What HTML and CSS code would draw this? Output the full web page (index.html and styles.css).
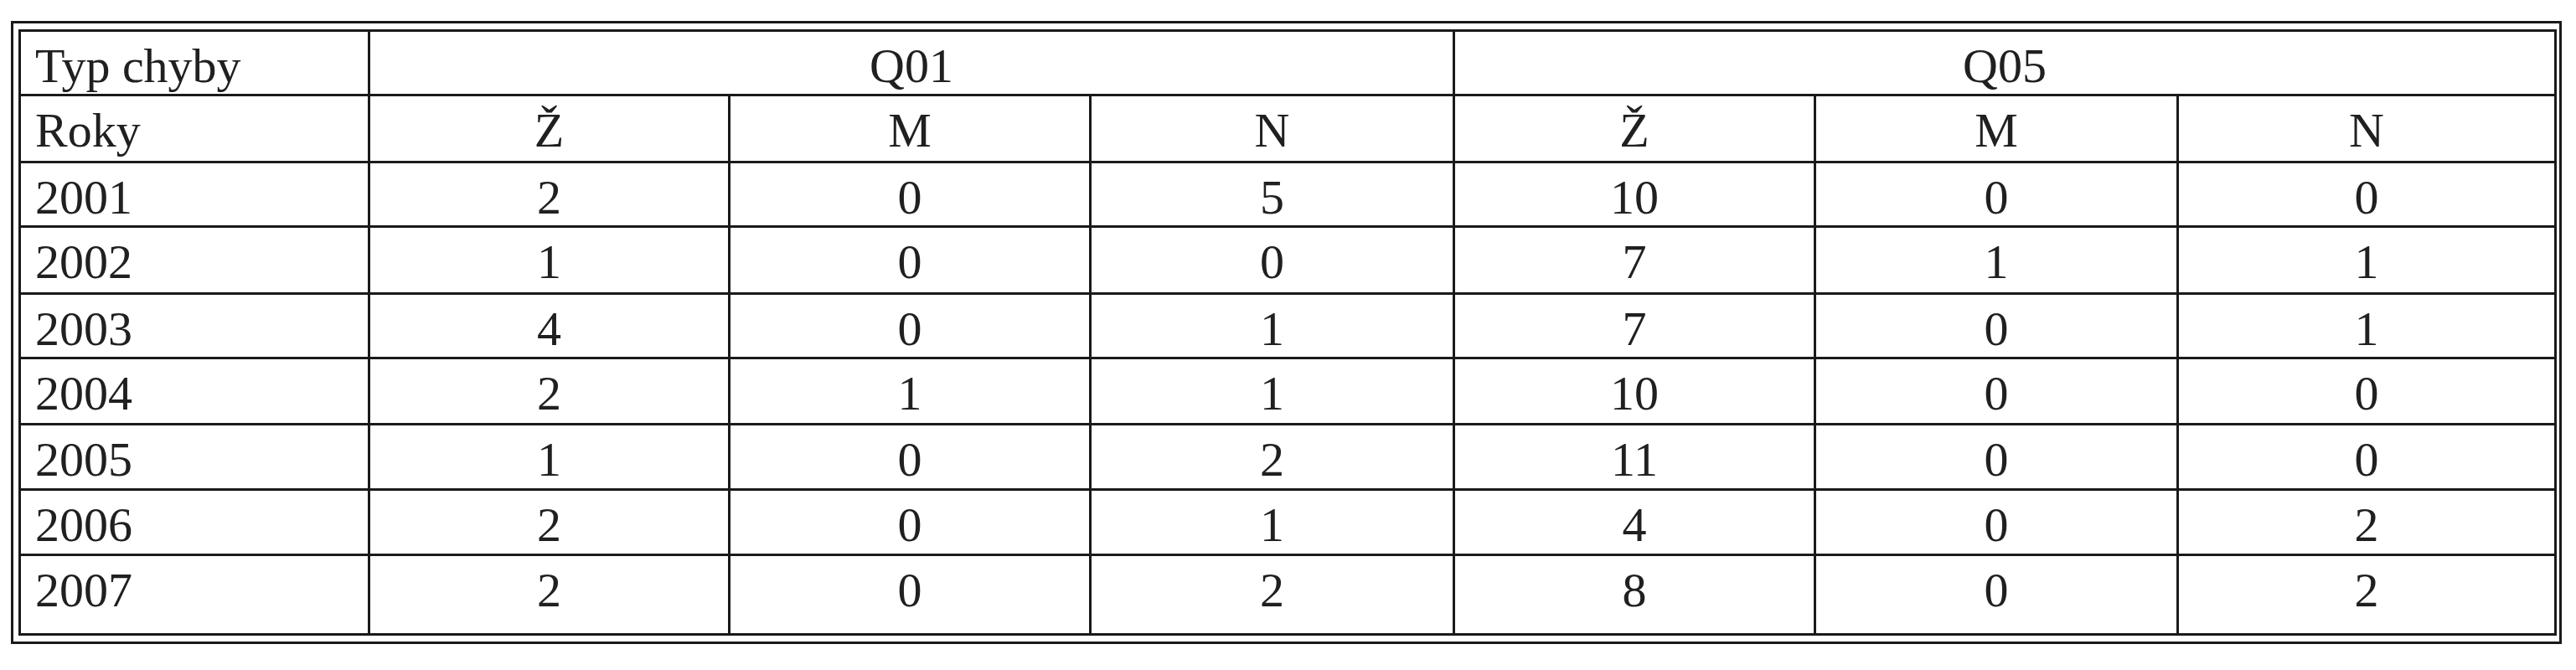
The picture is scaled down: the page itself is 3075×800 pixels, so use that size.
FILE: index.html
```html
<!DOCTYPE html>
<html lang="cs">
<head>
<meta charset="utf-8">
<title>Typ chyby</title>
<link rel="stylesheet" href="styles.css">
</head>
<body>
<div class="frame">
<table class="data">
<colgroup>
<col class="c1"><col class="c2"><col class="c3"><col class="c4"><col class="c5"><col class="c6"><col class="c7">
</colgroup>
<tbody>
<tr><td class="lbl">Typ chyby</td><td colspan="3">Q01</td><td colspan="3">Q05</td></tr>
<tr><td class="lbl">Roky</td><td>Ž</td><td>M</td><td>N</td><td>Ž</td><td>M</td><td>N</td></tr>
<tr><td class="lbl">2001</td><td>2</td><td>0</td><td>5</td><td>10</td><td>0</td><td>0</td></tr>
<tr><td class="lbl">2002</td><td>1</td><td>0</td><td>0</td><td>7</td><td>1</td><td>1</td></tr>
<tr><td class="lbl">2003</td><td>4</td><td>0</td><td>1</td><td>7</td><td>0</td><td>1</td></tr>
<tr><td class="lbl">2004</td><td>2</td><td>1</td><td>1</td><td>10</td><td>0</td><td>0</td></tr>
<tr><td class="lbl">2005</td><td>1</td><td>0</td><td>2</td><td>11</td><td>0</td><td>0</td></tr>
<tr><td class="lbl">2006</td><td>2</td><td>0</td><td>1</td><td>4</td><td>0</td><td>2</td></tr>
<tr><td class="lbl">2007</td><td>2</td><td>0</td><td>2</td><td>8</td><td>0</td><td>2</td></tr>
</tbody>
</table>
</div>
</body>
</html>
```
FILE: styles.css
```css
html, body {
  margin: 0;
  padding: 0;
  background: #ffffff;
}
body {
  padding: 25px 0 0 13px;
  font-family: "Liberation Serif", "Times New Roman", serif;
  color: #202020;
}
.frame {
  box-sizing: border-box;
  width: 3045px;
  border: 3px solid #1a1a1a;
  padding: 7px 6px;
}
.data {
  width: 3027px;
  table-layout: fixed;
  border-collapse: collapse;
  border: 3px solid #1a1a1a;
}
.c1 { width: 417px; }
.c2 { width: 430px; }
.c3 { width: 431px; }
.c4 { width: 434px; }
.c5 { width: 431px; }
.c6 { width: 433px; }
.c7 { width: 451px; }
.data td {
  border: 3px solid #1a1a1a;
  padding: 8px 0 0 0;
  vertical-align: top;
  text-align: center;
  font-size: 58px;
  line-height: 66px;
  box-sizing: border-box;
}
.data td.lbl {
  text-align: left;
  padding-left: 17px;
}
.data tr:nth-child(1) td { height: 73px; }
.data tr:nth-child(2) td { height: 80px; }
.data tr:nth-child(3) td { height: 77px; }
.data tr:nth-child(4) td { height: 80px; }
.data tr:nth-child(5) td { height: 77px; }
.data tr:nth-child(6) td { height: 79px; }
.data tr:nth-child(7) td { height: 78px; }
.data tr:nth-child(8) td { height: 78px; }
.data tr:nth-child(9) td { height: 95px; }
```
